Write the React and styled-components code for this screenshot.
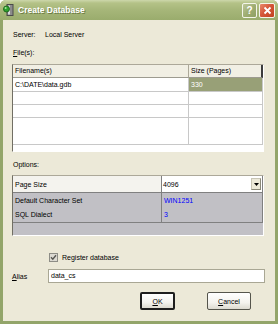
import React from 'react';
import styled, { createGlobalStyle } from 'styled-components';

const GlobalStyle = createGlobalStyle`
  html, body {
    margin: 0;
    padding: 0;
    background: #ffffff;
  }
  body {
    font-family: 'Liberation Sans', Arial, sans-serif;
    font-size: 7px;
    color: #000;
  }
`;

const Window = styled.div`
  width: 278px;
  height: 324px;
  display: flex;
  flex-direction: column;
  background: #93a56a;
  border-radius: 6px 6px 0 0;
  overflow: hidden;
`;

const TitleBar = styled.div`
  height: 20px;
  flex: none;
  display: flex;
  align-items: center;
  padding: 0 3px 0 3px;
  box-sizing: border-box;
  background: linear-gradient(#cdd7ab 0px, #b4c287 3px, #a6b679 10px, #9aac6d 20px);
`;

const TitleText = styled.span`
  flex: 1;
  margin-left: 4px;
  font-size: 8.5px;
  font-weight: bold;
  color: #ffffff;
  text-shadow: 1px 1px 0 #6d7d45;
`;

const CaptionButton = styled.div`
  width: ${({ $w }) => $w}px;
  height: 15px;
  margin-left: 2px;
  box-sizing: border-box;
  border: 1px solid #f3f5ea;
  border-radius: 2px;
  display: flex;
  align-items: center;
  justify-content: center;
  color: #fff;
  font-size: 10px;
  font-weight: bold;
  background: ${({ $red }) =>
    $red
      ? 'linear-gradient(135deg, #e98a6b 0%, #d5573a 45%, #c2421f 100%)'
      : 'linear-gradient(135deg, #bdc79a 0%, #9fae73 50%, #8f9f62 100%)'};
`;

const Frame = styled.div`
  flex: 1;
  display: flex;
  padding: 0 3px 3px;
`;

const Body = styled.div`
  flex: 1;
  background: #ece9d8;
  padding: 10px 11px 0 9px;
  display: flex;
  flex-direction: column;
`;

const TextRow = styled.div`
  height: 10px;
  line-height: 10px;
  display: flex;
  margin-top: ${({ $mt }) => $mt || 0}px;
  padding-left: 1px;
  white-space: nowrap;
`;

const RowLabel = styled.span`
  width: ${({ $w }) => $w || 'auto'};
  flex: none;
`;

const Grid = styled.div`
  margin-top: ${({ $mt }) => $mt}px;
  height: ${({ $h }) => $h}px;
  box-sizing: border-box;
  border-left: 1px solid #716f64;
  border-top: 1px solid #aca899;
  border-right: 1px solid #ffffff;
  border-bottom: 1px solid #ffffff;
  background: ${({ $bg }) => $bg};
`;

const FileTable = styled.div`
  display: grid;
  grid-template-columns: 176px 74px;
  grid-template-rows: 13px 14px 13px 13px 27px;
`;

const HeadCell = styled.div`
  box-sizing: border-box;
  background: #f1efe4;
  border-bottom: 1px solid #9d9b90;
  border-right: ${({ $last }) => ($last ? '2px solid #3c3c3c' : '1px solid #aca899')};
  padding-left: 2px;
  line-height: 12px;
  white-space: nowrap;
`;

const Cell = styled.div`
  box-sizing: border-box;
  background: ${({ $selected }) => ($selected ? '#98a077' : '#ffffff')};
  color: ${({ $selected }) => ($selected ? '#ffffff' : '#000')};
  border-bottom: 1px solid #c8c8c8;
  border-right: 1px solid #c8c8c8;
  padding-left: 2px;
  line-height: 13px;
  white-space: nowrap;
`;

const OptionTable = styled.div`
  display: grid;
  grid-template-columns: 149px 100px;
  grid-template-rows: 17px 14px 15px;
  border-right: 1px solid #808080;
  border-bottom: 1px solid #808080;
  width: 250px;
  box-sizing: border-box;
`;

const OptName = styled.div`
  box-sizing: border-box;
  border-right: 1px solid #808080;
  border-bottom: ${({ $line }) => ($line ? '1px solid #808080' : 'none')};
  background: ${({ $light }) => ($light ? '#f4f3ee' : 'transparent')};
  padding-left: 2px;
  display: flex;
  align-items: center;
  white-space: nowrap;
`;

const OptValue = styled.div`
  box-sizing: border-box;
  border-bottom: ${({ $line }) => ($line ? '1px solid #808080' : 'none')};
  color: #0000ff;
  padding-left: 2px;
  display: flex;
  align-items: center;
  white-space: nowrap;
`;

const Combo = styled.div`
  box-sizing: border-box;
  border-bottom: 1px solid #808080;
  background: #ffffff;
  display: flex;
  align-items: center;
  padding: 0 1px 0 1px;
`;

const ComboText = styled.span`
  flex: 1;
`;

const DropButton = styled.div`
  width: 10px;
  height: 12px;
  box-sizing: border-box;
  background: #ece9d8;
  border: 1px solid #c8c5b5;
  border-right-color: #8a8878;
  border-bottom-color: #8a8878;
  display: flex;
  align-items: center;
  justify-content: center;
`;

const CheckRow = styled.label`
  display: flex;
  align-items: center;
  margin-top: 17px;
  margin-left: 37px;
  height: 9px;
  gap: 4px;
`;

const CheckBox = styled.span`
  width: 9px;
  height: 9px;
  box-sizing: border-box;
  border: 1px solid #8d8d86;
  background: #dcdad2;
  display: flex;
  align-items: center;
  justify-content: center;
`;

const AliasRow = styled.div`
  display: flex;
  align-items: center;
  margin-top: 7px;
  height: 14px;
`;

const AliasLabel = styled.span`
  width: 36px;
`;

const Edit = styled.div`
  flex: 1;
  height: 14px;
  box-sizing: border-box;
  border: 1px solid #a9a794;
  background: #fff;
  padding-left: 2px;
  line-height: 12px;
  margin-right: -1px;
`;

const ButtonRow = styled.div`
  display: flex;
  margin-top: 9px;
  padding-left: 128px;
  gap: 32px;
`;

const PushButton = styled.div`
  width: ${({ $w }) => $w}px;
  height: 18px;
  box-sizing: border-box;
  border: ${({ $default }) => ($default ? '2px solid #1e1e1e' : '1px solid #55554c')};
  border-radius: 2px;
  background: linear-gradient(#ffffff 0%, #f4f3ee 60%, #dcdad0 100%);
  display: flex;
  align-items: center;
  justify-content: center;
`;

const U = styled.span`
  text-decoration: underline;
`;

const AppIcon = () => (
  <svg width="11" height="12" viewBox="0 0 11 12">
    <rect x="4" y="0.5" width="6" height="11" fill="#8c8c8c" stroke="#4a4a4a" />
    <rect x="5" y="1.5" width="2" height="9" fill="#d8d8d8" />
    <circle cx="3.5" cy="5" r="3" fill="#2ea12e" stroke="#155b15" strokeWidth="0.8" />
    <circle cx="2.6" cy="4" r="1" fill="#a8e6a0" />
  </svg>
);

const CloseGlyph = () => (
  <svg width="9" height="9" viewBox="0 0 9 9">
    <path d="M1.5 1.5 L7.5 7.5 M7.5 1.5 L1.5 7.5" stroke="#fff" strokeWidth="1.8" />
  </svg>
);

const DownArrow = () => (
  <svg width="5" height="3" viewBox="0 0 5 3">
    <path d="M0 0 H5 L2.5 3 Z" fill="#000" />
  </svg>
);

const Check = () => (
  <svg width="7" height="7" viewBox="0 0 7 7">
    <path d="M1 3.2 L2.8 5.2 L6 1.2" stroke="#575752" strokeWidth="1.4" fill="none" />
  </svg>
);

export default function App() {
  return (
    <>
      <GlobalStyle />
      <Window>
        <TitleBar>
          <AppIcon />
          <TitleText>Create Database</TitleText>
          <CaptionButton $w={15}>?</CaptionButton>
          <CaptionButton $w={16} $red>
            <CloseGlyph />
          </CaptionButton>
        </TitleBar>
        <Frame>
          <Body>
            <TextRow>
              <RowLabel $w="32px">Server:</RowLabel>
              <span>Local Server</span>
            </TextRow>
            <TextRow $mt={8}>
              <span>
                <U>F</U>ile(s):
              </span>
            </TextRow>

            <Grid $mt={6} $h={88} $bg="#ffffff">
              <FileTable>
                <HeadCell>Filename(s)</HeadCell>
                <HeadCell $last>Size (Pages)</HeadCell>
                <Cell>C:\DATE\data.gdb</Cell>
                <Cell $selected>330</Cell>
                <Cell />
                <Cell />
                <Cell />
                <Cell />
                <Cell />
                <Cell />
              </FileTable>
            </Grid>

            <TextRow $mt={8}>
              <span>Options:</span>
            </TextRow>

            <Grid $mt={5} $h={61} $bg="#c1c0c5">
              <OptionTable>
                <OptName $light $line>Page Size</OptName>
                <Combo>
                  <ComboText>4096</ComboText>
                  <DropButton>
                    <DownArrow />
                  </DropButton>
                </Combo>
                <OptName>Default Character Set</OptName>
                <OptValue>WIN1251</OptValue>
                <OptName>SQL Dialect</OptName>
                <OptValue>3</OptValue>
              </OptionTable>
            </Grid>

            <CheckRow>
              <CheckBox>
                <Check />
              </CheckBox>
              <span>Register database</span>
            </CheckRow>

            <AliasRow>
              <AliasLabel>
                <U>A</U>lias
              </AliasLabel>
              <Edit>data_cs</Edit>
            </AliasRow>

            <ButtonRow>
              <PushButton $w={35} $default>
                <span>
                  <U>O</U>K
                </span>
              </PushButton>
              <PushButton $w={44}>
                <span>
                  <U>C</U>ancel
                </span>
              </PushButton>
            </ButtonRow>
          </Body>
        </Frame>
      </Window>
    </>
  );
}
